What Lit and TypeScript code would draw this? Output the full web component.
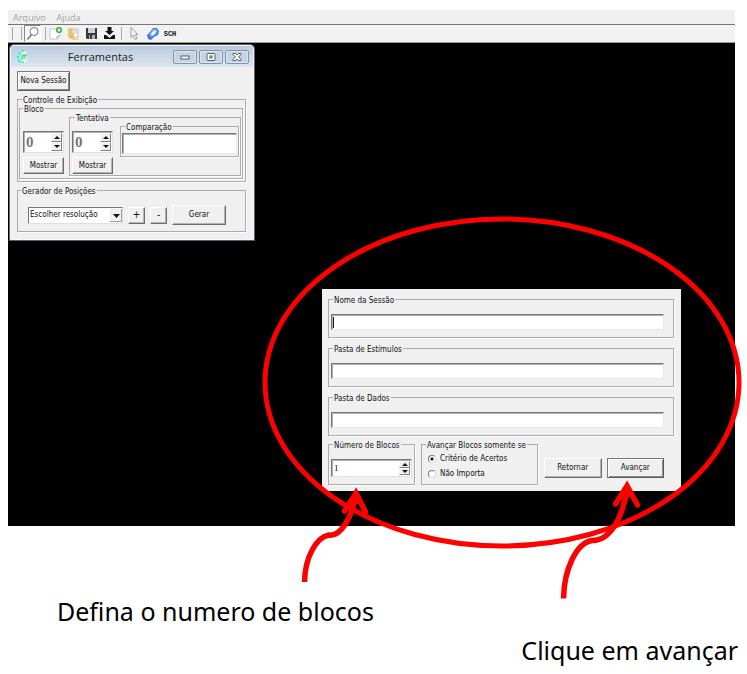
import { LitElement, html, css, svg, nothing } from "lit";
import { customElement, property } from "lit/decorators.js";

const controls = css`
  * { box-sizing: border-box; }
  :host { font-family: "DejaVu Sans Condensed", "DejaVu Sans", sans-serif; font-size: 8px; line-height: 10px; color: #111; }
  button, input, select { font: inherit; color: inherit; margin: 0; border-radius: 0; min-width: 0; }
  .btn {
    display: block; padding: 0; background: #f0f0f0; text-align: center; white-space: nowrap;
    border: 1px solid; border-color: #fff #6d6d6d #6d6d6d #fff;
    box-shadow: inset -1px -1px 0 #b4b4b4;
  }
  .btn.default { border-color: #7a7a7a #5c5c5c #5c5c5c #7a7a7a; box-shadow: inset 1px 1px 0 #fff, inset -1px -1px 0 #8a8a8a; }
  .group {
    min-width: 0; margin: 0; padding: 0;
    border: 1px solid #acacac; box-shadow: 1px 1px 0 #fdfdfd;
  }
  .group > legend { margin-left: 3px; padding: 2px 1px 0 1px; height: 11px; line-height: 9px; background: #f0f0f0; white-space: nowrap; }
  .text {
    display: block; width: 100%; background: #fff; padding: 0 1px; outline: none;
    border: 1px solid; border-color: #777 #e8e8e8 #e8e8e8 #777;
    box-shadow: inset 1px 1px 0 #b0b0b0;
  }
`;

@customElement("spin-box")
export class SpinBox extends LitElement {
  @property() label = "";
  @property() value = "0";
  @property({ type: Boolean, reflect: true }) big = false;

  static styles = [controls, css`
    :host { display: flex; height: 18px; background: #fff; border: 1px solid; border-color: #777 #e0e0e0 #e0e0e0 #777; box-shadow: inset 1px 1px 0 #b0b0b0; padding: 1px; }
    :host([big]) { height: 22px; }
    .field { flex: 1; width: 0; border: 0; background: none; padding: 0 1px; outline: none; appearance: textfield; font-family: "Liberation Serif", serif; font-size: 9px; }
    .field::-webkit-inner-spin-button { appearance: none; }
    :host([big]) .field { font-size: 15px; font-weight: bold; color: #777; }
    .arrows { display: flex; flex-direction: column; width: 11px; }
    .arrow { flex: 1; display: flex; align-items: center; justify-content: center; padding: 0; background: #f0f0f0; border: 1px solid; border-color: #f8f8f8 #808080 #808080 #f8f8f8; }
    .arrow svg { display: block; flex: none; }
  `];

  render() {
    return html`
      <input class="field" type="number" aria-label=${this.label} .value=${this.value} />
      <span class="arrows">
        <button class="arrow" aria-label="Aumentar"><svg width="6" height="3"><path d="M0 3 3 0 6 3z" fill="#111" /></svg></button>
        <button class="arrow" aria-label="Diminuir"><svg width="6" height="3"><path d="M0 0 3 3 6 0z" fill="#111" /></svg></button>
      </span>`;
  }
}

@customElement("tools-window")
export class ToolsWindow extends LitElement {
  static styles = [controls, css`
    :host { display: block; background: #f0f0f0; border: 1px solid #f4f8fb; border-radius: 4px 4px 0 0; box-shadow: 0 0 0 1px #54606c; overflow: hidden; }
    .title { display: flex; align-items: center; height: 21px; padding: 0 4px 0 5px; background: linear-gradient(#bccbdc, #dbe5f0); }
    .title h1 { flex: 1; margin: 0; text-align: center; font: 11px/16px "Open Sans", "Noto Sans", sans-serif; color: #1a1a1a; }
    .caps { display: flex; gap: 2px; }
    .cap { width: 24px; height: 14px; padding: 0; display: grid; place-items: center; border: 1px solid #8494a8; border-radius: 2px; background: #c5d3e3; box-shadow: inset 0 0 0 1px #dbe5ef; }
    .cap svg, .logo { display: block; }
    .body { display: flex; flex-direction: column; padding: 4px 7px 7px 6px; }
    .new { width: 53px; height: 20px; margin-bottom: 3px; }
    .nested { margin-top: -2px; }
    .display { padding: 0 2px 2px 1px; margin-bottom: 3px; }
    .block { display: flex; gap: 5px; padding: 0 1px 2px 3px; }
    .row { display: flex; gap: 5px; }
    .trial { flex: 1; padding: 0 1px 1px 2px; }
    .trial .row { gap: 7px; }
    .col { width: 41px; display: flex; flex-direction: column; gap: 4px; justify-content: flex-end; }
    .block .first { padding-bottom: 2px; }
    .btn.show { height: 17px; }
    .compare { flex: 1; align-self: flex-start; padding: 1px 1px 2px 1px; }
    .compare .text { height: 21px; }
    .trial .col { padding-top: 8px; }
    .positions .row { padding: 9px 19px 6px 10px; align-items: center; }
    .positions select { width: 95px; height: 17px; appearance: none; padding: 0 12px 0 1px; background: none; border: 1px solid; border-color: #777 #e0e0e0 #e0e0e0 #777; }
    .combo { display: grid; background: #fff; }
    .combo > * { grid-area: 1 / 1; }
    .combo svg { justify-self: end; align-self: center; margin-right: 1px; }
    .small { width: 17px; height: 17px; font-size: 10px; }
    .make { flex: 1; height: 20px; }
  `];

  render() {
    return html`
      <header class="title">
        <svg class="logo" width="12" height="14" viewBox="0 0 12 14" fill="none">
          <path d="M6 1h3l2 2v7l-2 3H4L1 9V4l2-3z" fill="#e4f3f4" />
          <path d="M4 2 2 5v4l2 3" stroke="#35dfe0" stroke-width="2" stroke-dasharray="3 1" />
          <path d="M5 1v2M5 4v6M5 11v2" stroke="#7cebd0" stroke-width="2" />
          <path d="M6 1h2M7 5v4M9 5v4M7 5h4M6 12h2" stroke="#22d34e" stroke-width="1" />
        </svg>
        <h1>Ferramentas</h1>
        <span class="caps">
          <button class="cap" aria-label="Minimizar"><svg width="10" height="8"><rect x="1" y="3" width="8" height="3" fill="#fff" stroke="#4f5d6e" /></svg></button>
          <button class="cap" aria-label="Maximizar"><svg width="10" height="8"><rect x="1" y="0.500" width="8" height="7" rx="1" fill="#fff" stroke="#4f5d6e" /><rect x="4" y="3" width="2" height="2" fill="#fff" stroke="#4f5d6e" /></svg></button>
          <button class="cap" aria-label="Fechar"><svg width="10" height="8"><path d="M1 .5h2.500L5 2 6.500.5H9v1L6.500 4 9 6.500v1H6.500L5 6 3.500 7.500H1v-1L3.500 4 1 1.500z" fill="#fff" stroke="#4f5d6e" /></svg></button>
        </span>
      </header>
      <div class="body">
        <button class="btn default new">Nova Sessão</button>
        <fieldset class="group display">
          <legend>Controle de Exibição</legend>
          <fieldset class="group nested">
            <legend>Bloco</legend>
            <div class="block">
              <div class="col first">
                <spin-box big label="Bloco" value="0"></spin-box>
                <button class="btn show">Mostrar</button>
              </div>
              <fieldset class="group nested trial">
                <legend>Tentativa</legend>
                <div class="row">
                  <div class="col">
                    <spin-box big label="Tentativa" value="0"></spin-box>
                    <button class="btn show">Mostrar</button>
                  </div>
                  <fieldset class="group nested compare">
                    <legend>Comparação</legend>
                    <input class="text" type="text" aria-label="Comparação" />
                  </fieldset>
                </div>
              </fieldset>
            </div>
          </fieldset>
        </fieldset>
        <fieldset class="group positions">
          <legend>Gerador de Posições</legend>
          <div class="row">
            <span class="combo">
              <svg width="12" height="13"><rect width="12" height="13" fill="#f0f0f0" /><path d="M11.500 0v12.500H0" fill="none" stroke="#9a9a9a" /><path d="M3 5h7L6.500 9z" fill="#111" /></svg>
              <select aria-label="Resolução"><option>Escolher resolução</option></select>
            </span>
            <button class="btn small">+</button>
            <button class="btn small">-</button>
            <button class="btn make">Gerar</button>
          </div>
        </fieldset>
      </div>`;
  }
}

@customElement("session-dialog")
export class SessionDialog extends LitElement {
  static styles = [controls, css`
    :host { display: flex; flex-direction: column; gap: 5px; background: #f0f0f0; padding: 5px 7px 6px 6px; }
    .group > legend { margin-left: 2px; }
    .entry { padding: 9px 9px 7px 2px; }
    .entry .text { height: 16px; }
    .caret { position: relative; }
    .caret::before { content: ""; position: absolute; left: 2px; top: 3px; width: 1px; height: 11px; background: #111; }
    .foot { display: flex; gap: 6px; align-items: stretch; margin-top: -2px; }
    .count { width: 87px; padding: 9px 2px 7px 2px; }
    .when { width: 117px; padding: 4px 0 1px 6px; }
    .when > legend { margin-left: -2px; }
    .when label { display: flex; align-items: center; gap: 4px; height: 14px; white-space: nowrap; margin-top: -2px; }
    .when label + label { margin-top: 1px; }
    .when input { appearance: none; width: 8px; height: 8px; border-radius: 50%; background: #fff; border: 1px solid; border-color: #777 #ddd #ddd #777; }
    .when input:checked { background: radial-gradient(circle, #111 0 1px, #fff 2px); }
    .actions { flex: 1; display: flex; gap: 5px; align-items: center; padding: 12px 10px 0 0; }
    .actions .btn { flex: 1; height: 20px; }
  `];

  render() {
    const entry = (label: string, focused = false) => html`
      <fieldset class="group entry">
        <legend>${label}</legend>
        <div class=${focused ? "caret" : nothing}><input class="text" type="text" aria-label=${label} /></div>
      </fieldset>`;
    return html`
      ${entry("Nome da Sessão", true)} ${entry("Pasta de Estímulos")} ${entry("Pasta de Dados")}
      <div class="foot">
        <fieldset class="group count">
          <legend>Número de Blocos</legend>
          <spin-box label="Número de Blocos" value="1"></spin-box>
        </fieldset>
        <fieldset class="group when">
          <legend>Avançar Blocos somente se</legend>
          <label><input type="radio" name="when" checked />Critério de Acertos</label>
          <label><input type="radio" name="when" />Não Importa</label>
        </fieldset>
        <div class="actions">
          <button class="btn">Retornar</button>
          <button class="btn default">Avançar</button>
        </div>
      </div>`;
  }
}

const icons = {
  search: svg`<circle cx="8" cy="4.500" r="4" fill="#fff" stroke="#777" /><path d="M5.500 7.500 1.500 12.500" stroke="#777" stroke-width="1.500" />`,
  create: svg`<path d="M1 2h7v2h3v5L8 12H1z" fill="#fff" stroke="#c4c4c4" /><path d="M8 12V9h3" fill="#ddd" stroke="#b9b9b9" /><circle cx="10" cy="3" r="3" fill="#27a838" /><path d="M10 1v4M8 3h4" stroke="#fff" />`,
  open: svg`<path d="M1 1h5v11L1 10z" fill="#f3c964" /><path d="M5 2h6v8H5z" fill="#fff" stroke="#cdbb93" /><path d="M6 4h4M6 6h4" stroke="#9fc2df" /><path d="M4 5l3 2v6L2 11z" fill="#e8c06a" /><path d="M7 11h5v2H7z" fill="#f3d78f" />`,
  save: svg`<path d="M1 1h11v11H2l-1-1z" fill="#36383c" /><path d="M3 1h7v5H3z" fill="#cdd2d6" /><path d="M4 8h6v4H4z" fill="#aab0b5" /><path d="M5 8h2v4H5z" fill="#36383c" />`,
  load: svg`<path d="M4.500 0h4v4H11L6.500 8 2 4h2.500z" fill="#111" /><path d="M1 8v4h11V8h-2L6.500 11 3 8z" fill="#111" />`,
  pointer: svg`<path d="M3 .5v10l2.300-2.200 1.700 4 2-.8-1.700-4H10z" fill="#fafafa" stroke="#999" />`,
  run: svg`<path d="M7 1h4l2 3-1 4-4 2-3 3-3-1-1-4 3-3z" fill="#3b7fdb" /><path d="M7 2l4 0 1 2-3 4-4 2-2-2z" fill="#79aef2" /><ellipse cx="7.500" cy="6" rx="3" ry="1.500" transform="rotate(-45 7.500 6)" fill="#fff" />`,
};

@customElement("app-root")
export class AppRoot extends LitElement {
  static styles = [controls, css`
    :host { display: block; position: relative; background: #fff; padding: 10px 12px 0 8px; min-height: 100vh; overflow: hidden; }
    .menu { display: flex; gap: 11px; height: 14px; padding-left: 5px; background: #f0f0f0; }
    .menu button { border: 0; padding: 0; background: none; color: #a3a3a3; font: 9px/13px "Open Sans", "Noto Sans", sans-serif; }
    .tools { display: flex; align-items: center; height: 19px; padding-left: 4px; background: #f2f2f2; border-top: 1px solid #777; border-bottom: 1px solid #999; }
    .tool { width: 18px; height: 17px; padding: 0; border: 0; background: none; display: grid; place-items: center; }
    .tool svg { display: block; }
    .tool.on { width: 17px; margin: 0 4px 0 2px; border: 1px solid; border-color: #888 #fff #fff #888; background: #f8f8f8; }
    .sch { font: bold 7px/10px "Liberation Mono", monospace; color: #111; }
    .bar { width: 1px; height: 13px; background: #aaa; }
    .bar.grip { margin-right: 8px; }
    .bar.mid { margin: 0 3px; }
    .desk { position: relative; height: 483px; background: #000; }
    tools-window { position: absolute; left: 2px; top: 2px; width: 244px; }
    session-dialog { position: absolute; left: 314px; top: 246px; width: 359px; }
    .marks { position: absolute; left: 0; top: 0; pointer-events: none; }
    .note { margin: 0; font: 25px/34px "Noto Sans", sans-serif; color: #000; }
    .note.a { padding: 68px 0 0 49px; }
    .note.b { padding-top: 5px; margin-right: -3px; text-align: right; }
  `];

  render() {
    const tool = (label: string, icon: unknown, on = false) => html`
      <button class="tool ${on ? "on" : ""}" aria-label=${label}><svg width="13" height="13" fill="none">${icon}</svg></button>`;
    return html`
      <nav class="menu"><button>Arquivo</button><button>Ajuda</button></nav>
      <div class="tools">
        <span class="bar grip"></span><span class="bar"></span>
        ${tool("Ferramentas", icons.search, true)}
        <span class="bar"></span>
        ${tool("Novo", icons.create)} ${tool("Abrir", icons.open)} ${tool("Salvar", icons.save)} ${tool("Carregar", icons.load)}
        <span class="bar mid"></span>
        ${tool("Selecionar", icons.pointer)} ${tool("Executar", icons.run)}
        <button class="tool sch">SCH</button>
      </div>
      <main class="desk">
        <tools-window></tools-window>
        <session-dialog></session-dialog>
      </main>
      <p class="note a">Defina o numero de blocos</p>
      <p class="note b">Clique em avançar</p>
      <svg class="marks" width="747" height="674" fill="none" stroke="#f00" stroke-width="5.500">
        <ellipse cx="502" cy="382.500" rx="237" ry="163.500" stroke-width="5" />
        <path d="M304.500 582C305 556 317 537 329 535C340 537 352 518 355 497" />
        <path d="M344.500 511 356 493 365.500 512" stroke-linecap="round" />
        <path d="M356 488 348 504H364z" fill="#f00" stroke="none" />
        <path d="M563.500 598.500C564 570 576 543 592 540.500C612 541 623 514 627 490" />
        <path d="M615.500 504 627 486 637.500 505" stroke-linecap="round" />
        <path d="M627 481 619 497H635z" fill="#f00" stroke="none" />
      </svg>`;
  }
}
